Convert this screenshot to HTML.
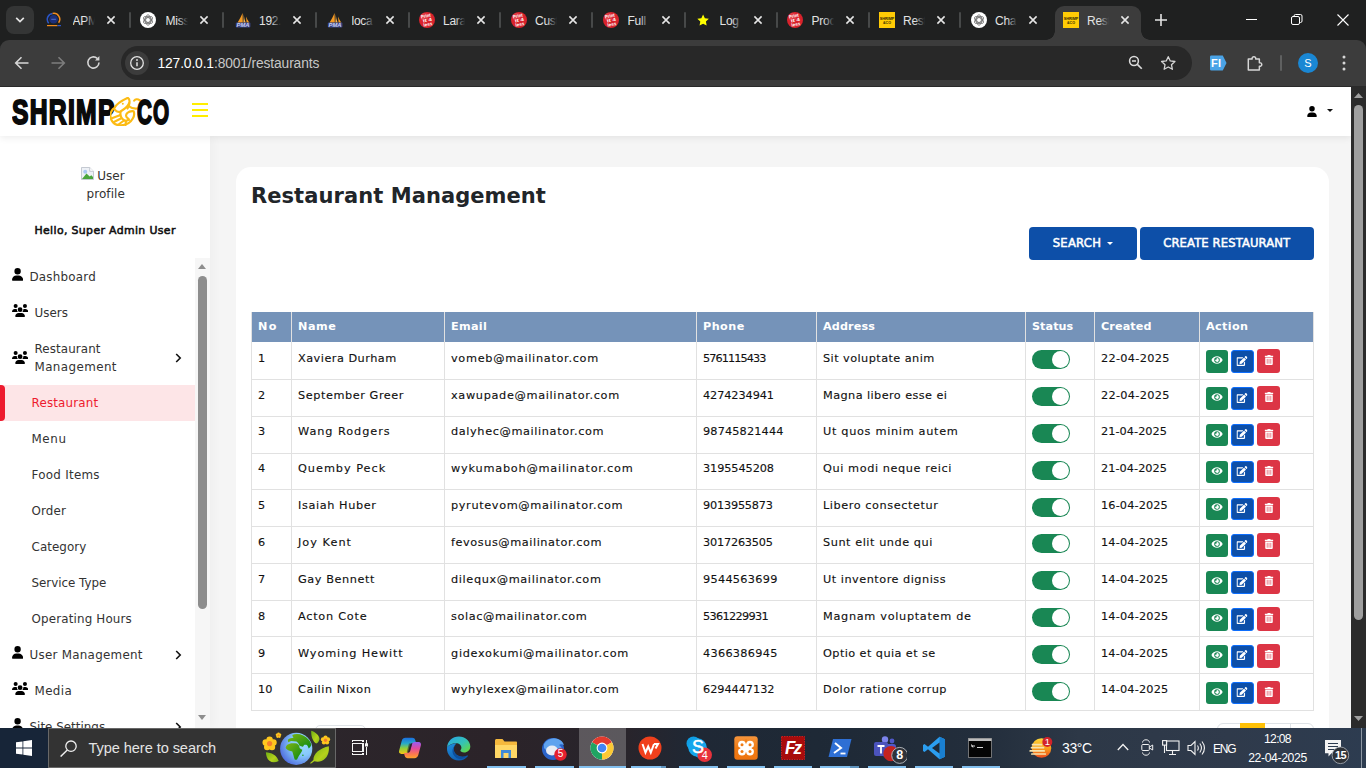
<!DOCTYPE html>
<html lang="en">
<head>
<meta charset="utf-8">
<title>Restaurant Management</title>
<style>
*{box-sizing:border-box;margin:0;padding:0}
html,body{width:1366px;height:768px;overflow:hidden;background:#f5f5f5}
body{position:relative;font-family:"DejaVu Sans","Liberation Sans",sans-serif;color:#212529}
.abs{position:absolute}
svg{display:block}
i{font-style:normal}
/* ---------- Chrome frame ---------- */
#tabstrip{position:absolute;left:0;top:0;width:1366px;height:52px;background:#1f2020;font-family:"Liberation Sans",sans-serif}
#toolbar{position:absolute;left:0;top:40px;width:1366px;height:46px;background:#3c3c3c;border-radius:9px 9px 0 0;font-family:"Liberation Sans",sans-serif}
#tbline{position:absolute;left:0;top:86px;width:1366px;height:1px;background:#2a2a2a}
.tab{position:absolute;top:6px;height:34px;color:#e3e3e3}
.tab .fav{position:absolute;left:8px;top:6px;width:16px;height:16px}
.tab .tt{position:absolute;top:6px;width:22px;height:18px;line-height:18px;overflow:hidden;white-space:nowrap;font-size:12px;letter-spacing:-.25px}
.tab .tt:after{content:"";position:absolute;right:0;top:0;width:10px;height:18px;background:linear-gradient(90deg,rgba(31,32,32,0),#1f2020)}
.tab.act .tt:after{background:linear-gradient(90deg,rgba(60,60,60,0),#3c3c3c)}
.tab .sep{position:absolute;top:6px;width:2px;height:16px;background:#474949;border-radius:1px}
.tab.act{background:#3c3c3c;border-radius:9px 9px 0 0}
.tab.act:before,.tab.act:after{content:"";position:absolute;bottom:0;width:9px;height:9px}
.tab.act:before{left:-9px;background:radial-gradient(circle at 0 0,rgba(60,60,60,0) 8.500px,#3c3c3c 9px)}
.tab.act:after{right:-9px;background:radial-gradient(circle at 100% 0,rgba(60,60,60,0) 8.500px,#3c3c3c 9px)}
#omni{position:absolute;left:121px;top:6px;width:1071px;height:34px;border-radius:17px;background:#282828}
#omni .info{position:absolute;left:4px;top:5px;width:24px;height:24px;border-radius:12px;background:#3c3c3c}
#omni .url{position:absolute;left:36.500px;top:9px;font-size:13.800px;line-height:18px;color:#fff;white-space:nowrap}
#omni .url span{color:#c7c7c7}
/* ---------- page ---------- */
#page{position:absolute;left:0;top:87px;width:1351px;height:641px;background:#f5f5f5;overflow:hidden}
#nav{position:absolute;left:0;top:0;width:1351px;height:49px;background:#fff;box-shadow:0 2px 7px rgba(0,0,0,.075);z-index:3}
#logo .lg{position:absolute;top:3px;font-family:"Liberation Sans",sans-serif;font-weight:700;font-size:34.500px;line-height:44px;color:#0a0a0a;transform-origin:0 50%;transform:scaleX(.715);-webkit-text-stroke:2px #0a0a0a;letter-spacing:1.800px;white-space:nowrap}
#logo .lg.co{transform:scaleX(.6)}
#side{position:absolute;left:0;top:49px;width:210px;height:592px;background:#fff;z-index:2;box-shadow:3px 0 10px rgba(0,0,0,.03)}
.alt{font-size:12px;line-height:18px;color:#333;white-space:nowrap}
.hello{font-size:10.900px;font-weight:400;line-height:18px;color:#111;white-space:nowrap;-webkit-text-stroke:.55px #111}
.ni{font-size:11.900px;line-height:18px;color:#333;white-space:nowrap}
.ni.on{color:#ed1b2e}
#card{position:absolute;left:236px;top:80px;width:1093px;height:600px;background:#fff;border-radius:15px}
#ttl{left:15px;top:13px;letter-spacing:.07px;font-size:21px;font-weight:700;line-height:32px;color:#212529;white-space:nowrap}
.btn{height:33px;border-radius:4px;background:#0d4fa8;color:#fff;font-size:11.600px;font-weight:400;line-height:33px;white-space:nowrap;-webkit-text-stroke:.5px #fff}
.btn .car{position:absolute;left:77.500px;top:15px;width:0;height:0;border-left:3.500px solid transparent;border-right:3.500px solid transparent;border-top:3.500px solid #fff}
#tbl{position:absolute;left:15px;top:145px;width:1063px;height:401px;font-size:11.300px}
.thead{position:absolute;left:0;top:0;width:1063px;height:30px;background:#7593b9}
.th{position:absolute;top:0;height:30px;padding-left:7px;line-height:30px;font-weight:700;color:#fff;font-size:11.200px;white-space:nowrap}
.tr{position:absolute;left:0;width:1063px;height:37px}
.hb{position:absolute;left:0;width:1063px;height:1px;background:#e1e1e1}
.td{position:absolute;top:0;height:36px;padding:7.500px 0 0 7px;line-height:18px;color:#111;white-space:nowrap;-webkit-text-stroke:.12px #111}
.vb{position:absolute;top:0;width:1px;height:399px;background:#e1e1e1}
.tog{position:absolute;left:7px;top:8px;width:38px;height:19px;border-radius:10px;background:#198754}
.tog i{position:absolute;right:1px;top:1px;width:17px;height:17px;border-radius:9px;background:#fff}
.ab{position:absolute;top:8px;width:22.800px;height:22.500px;border-radius:3px}
.ab svg{position:absolute;left:50%;top:50%;transform:translate(-50%,-50%);margin-top:-.8px}
.ab.g svg{margin-top:-1.400px}
.ab.g{left:7px;width:22.300px;background:#198754}
.ab.b{left:32px;background:#0d4fa8;border:1px solid #0d6efd}
.ab.r{left:58px;top:7px;width:23.200px;height:23.500px;background:#dc3545}
#vscroll{position:absolute;left:1351px;top:87px;width:15px;height:641px;background:#2b2b2b}
#vscroll .th2{position:absolute;left:3px;top:17.500px;width:9px;height:515.500px;border-radius:5px;background:#9f9f9f}
/* ---------- taskbar ---------- */
#task{position:absolute;left:0;top:728px;width:1366px;height:40px;background:linear-gradient(90deg,#2d2a2e 0,#2b2329 36%,#28242b 46%,#1f2835 51%,#1e2936 60%,#232e3c 72%,#2d3847 79%,#2f3a4b 90%,#2d3c50 100%);font-family:"Liberation Sans",sans-serif;color:#fff}
.bdg{font-size:10px;line-height:12px;color:#fff;text-align:center;font-family:"Liberation Sans",sans-serif}
.tx{line-height:16px;color:#fff;white-space:nowrap}
</style>
</head>
<body>
<div id="tabstrip">
<div class="abs" style="left:6px;top:6px;width:28px;height:28px;border-radius:8px;background:#343535"><svg class="abs" style="left:8px;top:9px" width="12" height="10" viewBox="0 0 12 10"><path d="M2.2 2.8L6 6.6l3.8-3.8" stroke="#e3e3e3" stroke-width="1.7" fill="none"/></svg></div>
<div class="tab" style="left:40px;width:92px"><span class="fav" style="left:6px"><svg width="16" height="16" viewBox="0 0 16 16"><circle cx="7.600" cy="7.300" r="4.300" fill="#1c2f7a"/><path d="M2.700 11.200A6 6 0 0 1 6.600 1.400" fill="none" stroke="#2a55c8" stroke-width="1.500"/><path d="M6.600 1.400A6 6 0 0 1 12.600 10.800" fill="none" stroke="#f28c1e" stroke-width="1.500"/><path d="M1 13.600h10.500" stroke="#f28c1e" stroke-width="1.200"/><path d="M11.500 13.600h3.500" stroke="#2a55c8" stroke-width="1.200"/><path d="M5.300 7.300h4.600" stroke="#5d7fe0" stroke-width=".8"/></svg></span><span class="tt" style="left:32.5px">APM</span><span class="abs" style="left:65.5px;top:9px"><svg class="x" width="10" height="10" viewBox="0 0 10 10"><path d="M1.400 1.400l7.200 7.200M8.600 1.400L1.400 8.600" stroke="#e6e6e6" stroke-width="1.550" fill="none"/></svg></span><span class="sep" style="left:88.500px"></span></div>
<div class="tab" style="left:133px;width:92px"><span class="fav" style="left:7px"><svg width="16" height="16" viewBox="0 0 16 16"><circle cx="8" cy="8" r="8" fill="#fff"/><g fill="none" stroke="#6b6b6b" stroke-width=".75"><ellipse cx="8" cy="8" rx="2.300" ry="5.200"/><ellipse cx="8" cy="8" rx="2.300" ry="5.200" transform="rotate(60 8 8)"/><ellipse cx="8" cy="8" rx="2.300" ry="5.200" transform="rotate(120 8 8)"/><circle cx="8" cy="8" r="3.600"/></g></svg></span><span class="tt" style="left:32.5px">Miss</span><span class="abs" style="left:65.5px;top:9px"><svg class="x" width="10" height="10" viewBox="0 0 10 10"><path d="M1.400 1.400l7.200 7.200M8.600 1.400L1.400 8.600" stroke="#e6e6e6" stroke-width="1.550" fill="none"/></svg></span><span class="sep" style="left:88.500px"></span></div>
<div class="tab" style="left:226.5px;width:92px"><span class="fav" style="left:8px"><svg width="16" height="16" viewBox="0 0 16 16"><path d="M7.600 1C6.300 4 4.600 7.200 2.400 10.800h5.400z" fill="#f59a23"/><path d="M8.800 2.200c.2 3.200.8 6 2 8.600H8.400z" fill="#f8b553"/><path d="M11 4.400c.9 2.200 2 4.400 3.400 6.400h-2.800z" fill="#f59a23"/></svg><svg class="abs" style="left:0;top:10px" width="16" height="6" viewBox="0 0 16 6"><rect x=".8" y=".6" width="14.600" height="4.800" rx="1" fill="#3a4685"/><text x="8" y="4.500" font-family="Liberation Sans,sans-serif" font-size="4.600" font-weight="700" font-style="italic" fill="#c9d0f5" text-anchor="middle" textLength="13" lengthAdjust="spacingAndGlyphs">PMA</text></svg></span><span class="tt" style="left:32.5px">192.</span><span class="abs" style="left:65.5px;top:9px"><svg class="x" width="10" height="10" viewBox="0 0 10 10"><path d="M1.400 1.400l7.200 7.200M8.600 1.400L1.400 8.600" stroke="#e6e6e6" stroke-width="1.550" fill="none"/></svg></span><span class="sep" style="left:88.500px"></span></div>
<div class="tab" style="left:319px;width:92px"><span class="fav" style="left:8px"><svg width="16" height="16" viewBox="0 0 16 16"><path d="M7.600 1C6.300 4 4.600 7.200 2.400 10.800h5.400z" fill="#f59a23"/><path d="M8.800 2.200c.2 3.200.8 6 2 8.600H8.400z" fill="#f8b553"/><path d="M11 4.400c.9 2.200 2 4.400 3.400 6.400h-2.800z" fill="#f59a23"/></svg><svg class="abs" style="left:0;top:10px" width="16" height="6" viewBox="0 0 16 6"><rect x=".8" y=".6" width="14.600" height="4.800" rx="1" fill="#3a4685"/><text x="8" y="4.500" font-family="Liberation Sans,sans-serif" font-size="4.600" font-weight="700" font-style="italic" fill="#c9d0f5" text-anchor="middle" textLength="13" lengthAdjust="spacingAndGlyphs">PMA</text></svg></span><span class="tt" style="left:32.5px">loca</span><span class="abs" style="left:65.5px;top:9px"><svg class="x" width="10" height="10" viewBox="0 0 10 10"><path d="M1.400 1.400l7.200 7.200M8.600 1.400L1.400 8.600" stroke="#e6e6e6" stroke-width="1.550" fill="none"/></svg></span><span class="sep" style="left:88.500px"></span></div>
<div class="tab" style="left:410.5px;width:92px"><span class="fav" style="left:8px"><svg width="16" height="16" viewBox="0 0 16 16"><circle cx="8" cy="8" r="8" fill="#d8222c"/><circle cx="5.500" cy="5" r="4" fill="#ee5a62" opacity=".45"/><g font-family="Liberation Sans,sans-serif" font-weight="700" fill="#fff" text-anchor="middle" transform="rotate(-12 8 8)"><text x="7.600" y="5.400" font-size="4.600" textLength="10" lengthAdjust="spacingAndGlyphs">Print</text><text x="8.400" y="9.800" font-size="4.800" textLength="9" lengthAdjust="spacingAndGlyphs">it 4</text><text x="8" y="14" font-size="4.600" textLength="9" lengthAdjust="spacingAndGlyphs">less</text></g></svg></span><span class="tt" style="left:32.5px">Lara</span><span class="abs" style="left:65.5px;top:9px"><svg class="x" width="10" height="10" viewBox="0 0 10 10"><path d="M1.400 1.400l7.200 7.200M8.600 1.400L1.400 8.600" stroke="#e6e6e6" stroke-width="1.550" fill="none"/></svg></span><span class="sep" style="left:88.500px"></span></div>
<div class="tab" style="left:502.5px;width:92px"><span class="fav" style="left:8px"><svg width="16" height="16" viewBox="0 0 16 16"><circle cx="8" cy="8" r="8" fill="#d8222c"/><circle cx="5.500" cy="5" r="4" fill="#ee5a62" opacity=".45"/><g font-family="Liberation Sans,sans-serif" font-weight="700" fill="#fff" text-anchor="middle" transform="rotate(-12 8 8)"><text x="7.600" y="5.400" font-size="4.600" textLength="10" lengthAdjust="spacingAndGlyphs">Print</text><text x="8.400" y="9.800" font-size="4.800" textLength="9" lengthAdjust="spacingAndGlyphs">it 4</text><text x="8" y="14" font-size="4.600" textLength="9" lengthAdjust="spacingAndGlyphs">less</text></g></svg></span><span class="tt" style="left:32.5px">Cust</span><span class="abs" style="left:65.5px;top:9px"><svg class="x" width="10" height="10" viewBox="0 0 10 10"><path d="M1.400 1.400l7.200 7.200M8.600 1.400L1.400 8.600" stroke="#e6e6e6" stroke-width="1.550" fill="none"/></svg></span><span class="sep" style="left:88.500px"></span></div>
<div class="tab" style="left:595px;width:92px"><span class="fav" style="left:8px"><svg width="16" height="16" viewBox="0 0 16 16"><circle cx="8" cy="8" r="8" fill="#d8222c"/><circle cx="5.500" cy="5" r="4" fill="#ee5a62" opacity=".45"/><g font-family="Liberation Sans,sans-serif" font-weight="700" fill="#fff" text-anchor="middle" transform="rotate(-12 8 8)"><text x="7.600" y="5.400" font-size="4.600" textLength="10" lengthAdjust="spacingAndGlyphs">Print</text><text x="8.400" y="9.800" font-size="4.800" textLength="9" lengthAdjust="spacingAndGlyphs">it 4</text><text x="8" y="14" font-size="4.600" textLength="9" lengthAdjust="spacingAndGlyphs">less</text></g></svg></span><span class="tt" style="left:32.5px">Full</span><span class="abs" style="left:65.5px;top:9px"><svg class="x" width="10" height="10" viewBox="0 0 10 10"><path d="M1.400 1.400l7.200 7.200M8.600 1.400L1.400 8.600" stroke="#e6e6e6" stroke-width="1.550" fill="none"/></svg></span><span class="sep" style="left:88.500px"></span></div>
<div class="tab" style="left:687px;width:92px"><span class="fav" style="left:8px"><svg width="16" height="16" viewBox="0 0 16 16"><path d="M8.100 2.600l1.750 3.700 4 .5-2.950 2.800.75 4L8.100 11.650 4.550 13.600l.75-4L2.350 6.800l4-.5z" fill="#ffff00"/></svg></span><span class="tt" style="left:32.5px">Log</span><span class="abs" style="left:65.5px;top:9px"><svg class="x" width="10" height="10" viewBox="0 0 10 10"><path d="M1.400 1.400l7.200 7.200M8.600 1.400L1.400 8.600" stroke="#e6e6e6" stroke-width="1.550" fill="none"/></svg></span><span class="sep" style="left:88.500px"></span></div>
<div class="tab" style="left:779px;width:92px"><span class="fav" style="left:8px"><svg width="16" height="16" viewBox="0 0 16 16"><circle cx="8" cy="8" r="8" fill="#d8222c"/><circle cx="5.500" cy="5" r="4" fill="#ee5a62" opacity=".45"/><g font-family="Liberation Sans,sans-serif" font-weight="700" fill="#fff" text-anchor="middle" transform="rotate(-12 8 8)"><text x="7.600" y="5.400" font-size="4.600" textLength="10" lengthAdjust="spacingAndGlyphs">Print</text><text x="8.400" y="9.800" font-size="4.800" textLength="9" lengthAdjust="spacingAndGlyphs">it 4</text><text x="8" y="14" font-size="4.600" textLength="9" lengthAdjust="spacingAndGlyphs">less</text></g></svg></span><span class="tt" style="left:32.5px">Proc</span><span class="abs" style="left:65.5px;top:9px"><svg class="x" width="10" height="10" viewBox="0 0 10 10"><path d="M1.400 1.400l7.200 7.200M8.600 1.400L1.400 8.600" stroke="#e6e6e6" stroke-width="1.550" fill="none"/></svg></span><span class="sep" style="left:88.500px"></span></div>
<div class="tab" style="left:870.5px;width:92px"><span class="fav" style="left:8px"><svg width="16" height="16" viewBox="0 0 16 16"><rect width="16" height="16" fill="#ffcb05"/><g font-family="Liberation Sans,sans-serif" font-weight="700" fill="#2b2203" text-anchor="middle"><text x="8" y="7.600" font-size="4.400" textLength="14.500" lengthAdjust="spacingAndGlyphs">SHRIMP</text><text x="8" y="12" font-size="4.400" textLength="8" lengthAdjust="spacingAndGlyphs">&amp;CO</text></g></svg></span><span class="tt" style="left:32.5px">Rest</span><span class="abs" style="left:65.5px;top:9px"><svg class="x" width="10" height="10" viewBox="0 0 10 10"><path d="M1.400 1.400l7.200 7.200M8.600 1.400L1.400 8.600" stroke="#e6e6e6" stroke-width="1.550" fill="none"/></svg></span><span class="sep" style="left:88.500px"></span></div>
<div class="tab" style="left:962.5px;width:92px"><span class="fav" style="left:8px"><svg width="16" height="16" viewBox="0 0 16 16"><circle cx="8" cy="8" r="8" fill="#fff"/><g fill="none" stroke="#6b6b6b" stroke-width=".75"><ellipse cx="8" cy="8" rx="2.300" ry="5.200"/><ellipse cx="8" cy="8" rx="2.300" ry="5.200" transform="rotate(60 8 8)"/><ellipse cx="8" cy="8" rx="2.300" ry="5.200" transform="rotate(120 8 8)"/><circle cx="8" cy="8" r="3.600"/></g></svg></span><span class="tt" style="left:32.5px">Cha</span><span class="abs" style="left:65.5px;top:9px"><svg class="x" width="10" height="10" viewBox="0 0 10 10"><path d="M1.400 1.400l7.200 7.200M8.600 1.400L1.400 8.600" stroke="#e6e6e6" stroke-width="1.550" fill="none"/></svg></span></div>
<div class="tab act" style="left:1055px;width:86px"><span class="fav" style="left:8px"><svg width="16" height="16" viewBox="0 0 16 16"><rect width="16" height="16" fill="#ffcb05"/><g font-family="Liberation Sans,sans-serif" font-weight="700" fill="#2b2203" text-anchor="middle"><text x="8" y="7.600" font-size="4.400" textLength="14.500" lengthAdjust="spacingAndGlyphs">SHRIMP</text><text x="8" y="12" font-size="4.400" textLength="8" lengthAdjust="spacingAndGlyphs">&amp;CO</text></g></svg></span><span class="tt" style="left:32px">Rest</span><span class="abs" style="left:65px;top:9px"><svg class="x" width="10" height="10" viewBox="0 0 10 10"><path d="M1.400 1.400l7.200 7.200M8.600 1.400L1.400 8.600" stroke="#e6e6e6" stroke-width="1.550" fill="none"/></svg></span></div>
<svg class="abs" style="left:1154px;top:13px" width="14" height="14" viewBox="0 0 14 14"><path d="M7 1v12M1 7h12" stroke="#e3e3e3" stroke-width="1.6"/></svg>
<svg class="abs" style="left:1246px;top:14px" width="11" height="11" viewBox="0 0 11 11"><path d="M0 5.5h11" stroke="#fff" stroke-width="1"/></svg>
<svg class="abs" style="left:1291px;top:14px" width="12" height="12" viewBox="0 0 12 12"><rect x=".5" y="2.5" width="8" height="8" rx="1.5" fill="none" stroke="#fff"/><path d="M3 2.5V2A1.5 1.5 0 0 1 4.5.5H9.5A1.5 1.5 0 0 1 11 2V7A1.5 1.5 0 0 1 9.5 8.5H9" fill="none" stroke="#fff"/></svg>
<svg class="abs" style="left:1337px;top:14px" width="12" height="12" viewBox="0 0 12 12"><path d="M.5.5l11 11M11.5.5l-11 11" stroke="#fff" stroke-width="1.1"/></svg>
</div>
<div id="toolbar">
<svg class="abs" style="left:14px;top:15px" width="16" height="16" viewBox="0 0 16 16"><path d="M14.5 8H2M7.5 2.2L1.7 8l5.8 5.8" fill="none" stroke="#d6d6d6" stroke-width="1.6"/></svg>
<svg class="abs" style="left:50px;top:15px" width="16" height="16" viewBox="0 0 16 16"><path d="M1.5 8H14M8.5 2.2L14.3 8l-5.8 5.8" fill="none" stroke="#7d7d7d" stroke-width="1.6"/></svg>
<svg class="abs" style="left:85px;top:14px" width="17" height="17" viewBox="0 0 17 17"><path d="M14 8.6A5.6 5.6 0 1 1 12.2 4.4" fill="none" stroke="#d6d6d6" stroke-width="1.6"/><path d="M14.4 2v4.4H10z" fill="#d6d6d6"/></svg>
<div id="omni"><div class="info"><svg class="abs" style="left:4px;top:4px" width="16" height="16" viewBox="0 0 16 16"><circle cx="8" cy="8" r="6.3" fill="none" stroke="#e3e3e3" stroke-width="1.3"/><path d="M8 7.2v4" stroke="#e3e3e3" stroke-width="1.5"/><circle cx="8" cy="5" r=".95" fill="#e3e3e3"/></svg></div><div class="url" style="letter-spacing:-0.125px">127.0.0.1<span>:8001/restaurants</span></div>
<svg class="abs" style="left:1006.500px;top:9.200px" width="15" height="15" viewBox="0 0 17 17"><circle cx="6.800" cy="6.800" r="5" fill="none" stroke="#dcdcdc" stroke-width="1.750"/><path d="M10.600 10.600l5 5" stroke="#dcdcdc" stroke-width="1.900"/><path d="M4.500 6.800h4.600" stroke="#dcdcdc" stroke-width="1.700"/></svg>
<svg class="abs" style="left:1039px;top:8.700px" width="16.500" height="16.500" viewBox="0 0 18 18"><path d="M9 1.8l2.2 4.7 5.1.6-3.8 3.5 1 5L9 13.1l-4.5 2.5 1-5L1.700 7.100l5.100-.6z" fill="none" stroke="#d6d6d6" stroke-width="1.4" stroke-linejoin="round"/></svg>
</div>
<svg class="abs" style="left:1210px;top:15px" width="17" height="16" viewBox="0 0 18 16"><path d="M1.500 0h12l4 8-4 8h-12A1.500 1.500 0 0 1 0 14.500v-13A1.500 1.500 0 0 1 1.500 0z" fill="#4aa3e6"/></svg><div class="abs" style="left:1211px;top:16px;font-size:11px;font-weight:700;color:#fff;line-height:14px;letter-spacing:.2px">FI</div>
<svg class="abs" style="left:1246px;top:13.500px" width="17.500" height="17.500" viewBox="0 0 19 19"><path d="M2.500 5.500h4.200a2 2 0 1 1 3.800 0h4v4a2 2 0 1 1 0 3.800v4h-12z" fill="none" stroke="#d6d6d6" stroke-width="1.6" stroke-linejoin="round"/></svg>
<div class="abs" style="left:1280px;top:15px;width:2px;height:16px;background:#5f6060;border-radius:1px"></div>
<div class="abs" style="left:1298px;top:13px;width:20px;height:20px;border-radius:10px;background:#1a87d4;color:#fff;font-size:11px;line-height:20px;text-align:center">S</div>
<svg class="abs" style="left:1342px;top:15px" width="4" height="16" viewBox="0 0 4 16"><circle cx="2" cy="2" r="1.500" fill="#d6d6d6"/><circle cx="2" cy="8" r="1.500" fill="#d6d6d6"/><circle cx="2" cy="14" r="1.500" fill="#d6d6d6"/></svg>
</div>
<div id="tbline"></div>
<div id="page">
<div id="nav">
<div id="logo"><span class="lg" style="left:12px">SHRIMP</span>
<svg class="abs" style="left:109.700px;top:10px" width="32" height="29" viewBox="0 0 32 29"><g fill="none" stroke="#fcbb14" stroke-width="2.150" stroke-linecap="round" stroke-linejoin="round"><path d="M17.800 .8C12 3.500 6 7 4 11.500c1.500 3 4.500 4 6.500 3 3.500-2 7.500-5.500 8.800-8.500.5-2 .2-4-1.500-5.200z"/><path d="M3 12C.5 15-.2 19 1.200 22.500 3 26.500 7 28.500 11 28.300c5-.3 9.500-2.800 11.800-6.800 1.500-2.500 1.700-5 .9-7.200-2.200-.3-4.700.2-6.400 1.700-1.800 1.800-1.500 4 .2 5 1 .5 1.500 1 1.300 2"/><path d="M10.500 14.800c-.5 3.200 1 6.700 3.500 8.400 1.500.8 3.500.3 4.500-.7"/><path d="M1.200 21.500l8.600-3.300M4 25l7.300-3.700M8.500 27.500l5.500-4M15.500 28l.5-4"/><path d="M19.300 9.500c1.700 1.500 5.200 2.300 8.200 2 2.500-.5 4-2.500 3.800-5-.3-3-2.800-4.500-4.800-4.200-1 .2-1.800.7-2.300 1.300"/><path d="M19.300 6c.2 2 0 3.500-1.800 5.500"/></g><circle cx="12.800" cy="6.700" r="1" fill="#fcbf17"/></svg>
<span class="lg co" style="left:136.500px">CO</span></div>
<div class="abs" style="left:192px;top:15.500px;width:16px;height:2px;background:#ffee00"></div><div class="abs" style="left:192px;top:21.800px;width:16px;height:2px;background:#ffee00"></div><div class="abs" style="left:192px;top:27.800px;width:16px;height:2px;background:#ffee00"></div>
<div class="abs" style="left:1307px;top:19px"><svg width="10" height="11" viewBox="0 0 448 512"><path fill="#000" d="M224 256A128 128 0 1 0 224 0a128 128 0 1 0 0 256zm-45.700 48C79.800 304 0 383.800 0 482.300C0 498.700 13.300 512 29.700 512H418.300c16.400 0 29.700-13.300 29.700-29.700C448 383.800 368.200 304 269.700 304H178.300z"/></svg></div>
<div class="abs" style="left:1327px;top:22.300px;width:0;height:0;border-left:3.300px solid transparent;border-right:3.300px solid transparent;border-top:3.600px solid #111"></div>
</div>
<div id="side">
<div class="abs" style="left:81px;top:31px"><svg width="13" height="13" viewBox="0 0 13 13"><path d="M.5.5h8.200l3.800 3.800v8.200H.5z" fill="#eef1f6" stroke="#b9bec8" stroke-width=".8"/><path d="M8.700.5v3.800h3.800" fill="#fff" stroke="#b9bec8" stroke-width=".8"/><circle cx="4.200" cy="4.800" r="2" fill="#a9c7f2"/><path d="M1 12l4.500-5.500 3.200 3 1.600-1.300L12 10v2z" fill="#4aa63c"/></svg></div>
<div class="abs alt" style="left:97.300px;top:31px"><span style="letter-spacing:-0.024px">User</span></div>
<div class="abs alt" style="left:86.500px;top:49px"><span style="letter-spacing:0.079px">profile</span></div>
<div class="abs hello" style="left:34.500px;top:85.500px"><span style="letter-spacing:0.363px">Hello, Super Admin User</span></div>
<div class="abs" style="left:11.800px;top:132px"><svg width="11.2" height="12.8" viewBox="0 0 448 512"><path fill="#000" d="M224 256A128 128 0 1 0 224 0a128 128 0 1 0 0 256zm-45.700 48C79.800 304 0 383.800 0 482.300C0 498.700 13.300 512 29.700 512H418.300c16.400 0 29.700-13.300 29.700-29.700C448 383.800 368.200 304 269.700 304H178.300z"/></svg></div><div class="abs ni" style="left:29.5px;top:132px"><span style="letter-spacing:0.214px">Dashboard</span></div>
<div class="abs" style="left:11.800px;top:168px"><svg width="16.2" height="13" viewBox="0 0 640 512"><path fill="#000" d="M144 0a80 80 0 1 1 0 160A80 80 0 1 1 144 0zM512 0a80 80 0 1 1 0 160A80 80 0 1 1 512 0zM0 298.700C0 239.800 47.800 192 106.700 192h42.700c15.900 0 31 3.500 44.600 9.700c-1.300 7.200-1.900 14.700-1.900 22.300c0 38.200 16.800 72.500 43.300 96c-.2 0-.4 0-.7 0H21.300C9.600 320 0 310.400 0 298.700zM405.300 320c-.2 0-.4 0-.7 0c26.600-23.500 43.300-57.800 43.300-96c0-7.600-.7-15-1.900-22.300c13.600-6.300 28.700-9.700 44.600-9.700h42.700C592.200 192 640 239.800 640 298.700c0 11.800-9.600 21.300-21.300 21.300H405.300zM224 224a96 96 0 1 1 192 0 96 96 0 1 1 -192 0zM128 485.300C128 411.700 187.700 352 261.300 352H378.700C452.300 352 512 411.700 512 485.300c0 14.700-11.900 26.700-26.700 26.700H154.700c-14.700 0-26.700-11.900-26.700-26.700z"/></svg></div><div class="abs ni" style="left:34.5px;top:168px"><span style="letter-spacing:0.037px">Users</span></div>
<div class="abs" style="left:11.800px;top:214.5px"><svg width="16.2" height="13" viewBox="0 0 640 512"><path fill="#000" d="M144 0a80 80 0 1 1 0 160A80 80 0 1 1 144 0zM512 0a80 80 0 1 1 0 160A80 80 0 1 1 512 0zM0 298.700C0 239.800 47.800 192 106.700 192h42.700c15.900 0 31 3.500 44.600 9.700c-1.300 7.200-1.900 14.700-1.900 22.300c0 38.200 16.800 72.500 43.300 96c-.2 0-.4 0-.7 0H21.300C9.600 320 0 310.400 0 298.700zM405.300 320c-.2 0-.4 0-.7 0c26.600-23.500 43.300-57.800 43.300-96c0-7.600-.7-15-1.900-22.300c13.600-6.300 28.700-9.700 44.600-9.700h42.700C592.200 192 640 239.800 640 298.700c0 11.800-9.600 21.300-21.300 21.300H405.300zM224 224a96 96 0 1 1 192 0 96 96 0 1 1 -192 0zM128 485.300C128 411.700 187.700 352 261.300 352H378.700C452.300 352 512 411.700 512 485.300c0 14.700-11.900 26.700-26.700 26.700H154.700c-14.700 0-26.700-11.900-26.700-26.700z"/></svg></div><div class="abs ni" style="left:34.5px;top:204px"><span style="letter-spacing:0.102px">Restaurant</span></div><div class="abs ni" style="left:34.5px;top:222px"><span style="letter-spacing:0.409px">Management</span></div><div class="abs" style="left:174.500px;top:217px"><svg width="7" height="10" viewBox="0 0 7 10"><path d="M1.200 1l4 4-4 4" fill="none" stroke="#111" stroke-width="1.600"/></svg></div>
<div class="abs" style="left:0;top:249px;width:195px;height:36px;background:#fde5e7"></div><div class="abs" style="left:0;top:249px;width:5px;height:36px;background:#ed1b2e;border-radius:0 4px 4px 0"></div><div class="abs ni sub on" style="left:31.5px;top:258px"><span style="letter-spacing:0.169px">Restaurant</span></div>
<div class="abs ni sub" style="left:31.5px;top:294px"><span style="letter-spacing:0.599px">Menu</span></div>
<div class="abs ni sub" style="left:31.5px;top:330px"><span style="letter-spacing:0.274px">Food Items</span></div>
<div class="abs ni sub" style="left:31.5px;top:366px"><span style="letter-spacing:0.163px">Order</span></div>
<div class="abs ni sub" style="left:31.5px;top:402px"><span style="letter-spacing:0.073px">Category</span></div>
<div class="abs ni sub" style="left:31.5px;top:438px"><span style="letter-spacing:-0.02px">Service Type</span></div>
<div class="abs ni sub" style="left:31.5px;top:474px"><span style="letter-spacing:0.159px">Operating Hours</span></div>
<div class="abs" style="left:11.800px;top:510px"><svg width="11.2" height="12.8" viewBox="0 0 448 512"><path fill="#000" d="M224 256A128 128 0 1 0 224 0a128 128 0 1 0 0 256zm-45.700 48C79.800 304 0 383.800 0 482.300C0 498.700 13.300 512 29.700 512H418.300c16.400 0 29.700-13.300 29.700-29.700C448 383.800 368.200 304 269.700 304H178.300z"/></svg></div><div class="abs ni" style="left:29.5px;top:510px"><span style="letter-spacing:0.269px">User Management</span></div><div class="abs" style="left:174.500px;top:514px"><svg width="7" height="10" viewBox="0 0 7 10"><path d="M1.200 1l4 4-4 4" fill="none" stroke="#111" stroke-width="1.600"/></svg></div>
<div class="abs" style="left:11.800px;top:546px"><svg width="16.2" height="13" viewBox="0 0 640 512"><path fill="#000" d="M144 0a80 80 0 1 1 0 160A80 80 0 1 1 144 0zM512 0a80 80 0 1 1 0 160A80 80 0 1 1 512 0zM0 298.700C0 239.800 47.800 192 106.700 192h42.700c15.900 0 31 3.500 44.600 9.700c-1.300 7.200-1.900 14.700-1.900 22.300c0 38.200 16.800 72.500 43.300 96c-.2 0-.4 0-.7 0H21.300C9.600 320 0 310.400 0 298.700zM405.300 320c-.2 0-.4 0-.7 0c26.600-23.500 43.300-57.800 43.300-96c0-7.600-.7-15-1.900-22.300c13.600-6.300 28.700-9.700 44.600-9.700h42.700C592.200 192 640 239.800 640 298.700c0 11.800-9.600 21.300-21.300 21.300H405.300zM224 224a96 96 0 1 1 192 0 96 96 0 1 1 -192 0zM128 485.300C128 411.700 187.700 352 261.300 352H378.700C452.300 352 512 411.700 512 485.300c0 14.700-11.900 26.700-26.700 26.700H154.700c-14.700 0-26.700-11.900-26.700-26.700z"/></svg></div><div class="abs ni" style="left:34.5px;top:546px"><span style="letter-spacing:0.383px">Media</span></div>
<div class="abs" style="left:11.800px;top:582px"><svg width="11.2" height="12.8" viewBox="0 0 448 512"><path fill="#000" d="M224 256A128 128 0 1 0 224 0a128 128 0 1 0 0 256zm-45.700 48C79.800 304 0 383.800 0 482.300C0 498.700 13.300 512 29.700 512H418.300c16.400 0 29.700-13.300 29.700-29.700C448 383.800 368.200 304 269.700 304H178.300z"/></svg></div><div class="abs ni" style="left:29.5px;top:582px"><span style="letter-spacing:0.019px">Site Settings</span></div><div class="abs" style="left:174.500px;top:586px"><svg width="7" height="10" viewBox="0 0 7 10"><path d="M1.200 1l4 4-4 4" fill="none" stroke="#111" stroke-width="1.600"/></svg></div>
<div class="abs" style="left:195px;top:122px;width:15px;height:470px;background:#f6f6f6"></div>
<div class="abs" style="left:198px;top:140px;width:9px;height:333px;border-radius:5px;background:#8d8d8d"></div>
<div class="abs" style="left:198px;top:128px;width:0;height:0;border-left:4.500px solid transparent;border-right:4.500px solid transparent;border-bottom:5px solid #8d8d8d"></div>
<div class="abs" style="left:198px;top:579px;width:0;height:0;border-left:4.500px solid transparent;border-right:4.500px solid transparent;border-top:5px solid #8d8d8d"></div>
</div>
<div id="card">
<h1 class="abs" id="ttl">Restaurant Management</h1>
<div class="abs btn" style="left:793px;top:60px;width:108px"><span class="abs" style="left:23.700px;top:0"><span style="letter-spacing:0.262px">SEARCH</span></span><span class="car"></span></div>
<div class="abs btn" style="left:904px;top:60px;width:174px"><span class="abs" style="left:23.200px;top:0"><span style="letter-spacing:0.11px">CREATE RESTAURANT</span></span></div>
<div id="tbl">
<div class="thead">
<div class="th" style="left:0px;width:40px"><span style="letter-spacing:1.439px">No</span></div>
<div class="th" style="left:40px;width:153px"><span style="letter-spacing:0.57px">Name</span></div>
<div class="th" style="left:193px;width:252px"><span style="letter-spacing:0.337px">Email</span></div>
<div class="th" style="left:445px;width:120px"><span style="letter-spacing:0.465px">Phone</span></div>
<div class="th" style="left:565px;width:209px"><span style="letter-spacing:0.142px">Address</span></div>
<div class="th" style="left:774px;width:69px"><span style="letter-spacing:0.067px">Status</span></div>
<div class="th" style="left:843px;width:105px"><span style="letter-spacing:0.107px">Created</span></div>
<div class="th" style="left:948px;width:114px"><span style="letter-spacing:0.388px">Action</span></div>
</div>
<div class="tr" style="top:30.2px">
<div class="td" style="left:0px;width:40px">1</div>
<div class="td" style="left:40px;width:153px"><span style="letter-spacing:0.477px">Xaviera Durham</span></div>
<div class="td" style="left:193px;width:252px"><span style="letter-spacing:0.688px">vomeb@mailinator.com</span></div>
<div class="td" style="left:445px;width:120px"><span style="letter-spacing:-0.931px">5761115433</span></div>
<div class="td" style="left:565px;width:209px"><span style="letter-spacing:0.432px">Sit voluptate anim</span></div>
<div class="td" style="left:774px;width:69px"><span class="tog"><i></i></span></div>
<div class="td" style="left:843px;width:105px"><span style="letter-spacing:0.305px">22-04-2025</span></div>
<div class="td" style="left:948px;width:114px"><span class="ab g"><svg width="11.500" height="10" viewBox="0 0 576 512"><path fill="#fff" d="M572.520 241.400C518.290 135.590 410.930 64 288 64S57.680 135.640 3.480 241.410a32.350 32.350 0 0 0 0 29.190C57.710 376.410 165.070 448 288 448s230.320-71.640 284.520-177.410a32.350 32.350 0 0 0 0-29.190zM288 400a144 144 0 1 1 144-144 143.930 143.930 0 0 1-144 144zm0-240a95.310 95.310 0 0 0-25.310 3.790 47.850 47.850 0 0 1-66.900 66.900A95.780 95.780 0 1 0 288 160z"/></svg></span><span class="ab b"><svg width="11" height="10" viewBox="0 0 576 512"><path fill="#fff" d="M402.600 83.200l90.200 90.200c3.800 3.800 3.800 10 0 13.800L274.400 405.600l-92.800 10.300c-12.400 1.400-22.900-9.100-21.500-21.500l10.300-92.800L388.800 83.200c3.800-3.800 10-3.800 13.800 0zm162-22.900l-48.800-48.800c-15.200-15.200-39.900-15.200-55.200 0l-35.400 35.400c-3.800 3.800-3.800 10 0 13.800l90.200 90.200c3.800 3.800 10 3.800 13.800 0l35.400-35.400c15.200-15.300 15.200-40 0-55.200zM384 346.200V448H64V128h229.800c3.200 0 6.200-1.300 8.500-3.500l40-40c7.600-7.600 2.200-20.500-8.500-20.500H48C21.500 64 0 85.500 0 112v352c0 26.500 21.500 48 48 48h352c26.500 0 48-21.500 48-48V306.200c0-10.700-12.900-16-20.500-8.500l-40 40c-2.200 2.300-3.500 5.300-3.500 8.500z"/></svg></span><span class="ab r"><svg width="9" height="10" viewBox="0 0 448 512"><path fill="#fff" d="M32 464a48 48 0 0 0 48 48h288a48 48 0 0 0 48-48V128H32zm272-256a16 16 0 0 1 32 0v224a16 16 0 0 1-32 0zm-96 0a16 16 0 0 1 32 0v224a16 16 0 0 1-32 0zm-96 0a16 16 0 0 1 32 0v224a16 16 0 0 1-32 0zM432 32H312l-9.400-18.700A24 24 0 0 0 281.100 0H166.800a23.720 23.720 0 0 0-21.400 13.300L136 32H16A16 16 0 0 0 0 48v32a16 16 0 0 0 16 16h416a16 16 0 0 0 16-16V48a16 16 0 0 0-16-16z"/></svg></span></div>
</div>
<div class="tr" style="top:67.05px">
<div class="td" style="left:0px;width:40px">2</div>
<div class="td" style="left:40px;width:153px"><span style="letter-spacing:0.554px">September Greer</span></div>
<div class="td" style="left:193px;width:252px"><span style="letter-spacing:0.662px">xawupade@mailinator.com</span></div>
<div class="td" style="left:445px;width:120px"><span style="letter-spacing:-0.098px">4274234941</span></div>
<div class="td" style="left:565px;width:209px"><span style="letter-spacing:0.412px">Magna libero esse ei</span></div>
<div class="td" style="left:774px;width:69px"><span class="tog"><i></i></span></div>
<div class="td" style="left:843px;width:105px"><span style="letter-spacing:0.305px">22-04-2025</span></div>
<div class="td" style="left:948px;width:114px"><span class="ab g"><svg width="11.500" height="10" viewBox="0 0 576 512"><path fill="#fff" d="M572.520 241.400C518.290 135.590 410.930 64 288 64S57.680 135.640 3.480 241.410a32.350 32.350 0 0 0 0 29.190C57.710 376.410 165.070 448 288 448s230.320-71.640 284.520-177.410a32.350 32.350 0 0 0 0-29.190zM288 400a144 144 0 1 1 144-144 143.930 143.930 0 0 1-144 144zm0-240a95.310 95.310 0 0 0-25.310 3.790 47.850 47.850 0 0 1-66.900 66.900A95.780 95.780 0 1 0 288 160z"/></svg></span><span class="ab b"><svg width="11" height="10" viewBox="0 0 576 512"><path fill="#fff" d="M402.600 83.200l90.200 90.200c3.800 3.800 3.800 10 0 13.800L274.400 405.600l-92.800 10.300c-12.400 1.400-22.900-9.100-21.500-21.500l10.300-92.800L388.800 83.200c3.800-3.800 10-3.800 13.800 0zm162-22.900l-48.800-48.800c-15.200-15.200-39.900-15.200-55.200 0l-35.400 35.400c-3.800 3.800-3.800 10 0 13.800l90.200 90.200c3.800 3.800 10 3.800 13.800 0l35.400-35.400c15.200-15.300 15.200-40 0-55.200zM384 346.200V448H64V128h229.800c3.200 0 6.200-1.300 8.500-3.500l40-40c7.600-7.600 2.200-20.500-8.500-20.500H48C21.500 64 0 85.500 0 112v352c0 26.500 21.500 48 48 48h352c26.500 0 48-21.500 48-48V306.200c0-10.700-12.900-16-20.500-8.500l-40 40c-2.200 2.300-3.500 5.300-3.500 8.500z"/></svg></span><span class="ab r"><svg width="9" height="10" viewBox="0 0 448 512"><path fill="#fff" d="M32 464a48 48 0 0 0 48 48h288a48 48 0 0 0 48-48V128H32zm272-256a16 16 0 0 1 32 0v224a16 16 0 0 1-32 0zm-96 0a16 16 0 0 1 32 0v224a16 16 0 0 1-32 0zm-96 0a16 16 0 0 1 32 0v224a16 16 0 0 1-32 0zM432 32H312l-9.400-18.700A24 24 0 0 0 281.100 0H166.800a23.720 23.720 0 0 0-21.400 13.300L136 32H16A16 16 0 0 0 0 48v32a16 16 0 0 0 16 16h416a16 16 0 0 0 16-16V48a16 16 0 0 0-16-16z"/></svg></span></div>
</div>
<div class="tr" style="top:103.9px">
<div class="td" style="left:0px;width:40px">3</div>
<div class="td" style="left:40px;width:153px"><span style="letter-spacing:0.93px">Wang Rodgers</span></div>
<div class="td" style="left:193px;width:252px"><span style="letter-spacing:0.612px">dalyhec@mailinator.com</span></div>
<div class="td" style="left:445px;width:120px"><span style="letter-spacing:0.133px">98745821444</span></div>
<div class="td" style="left:565px;width:209px"><span style="letter-spacing:0.682px">Ut quos minim autem</span></div>
<div class="td" style="left:774px;width:69px"><span class="tog"><i></i></span></div>
<div class="td" style="left:843px;width:105px"><span style="letter-spacing:0.038px">21-04-2025</span></div>
<div class="td" style="left:948px;width:114px"><span class="ab g"><svg width="11.500" height="10" viewBox="0 0 576 512"><path fill="#fff" d="M572.520 241.400C518.290 135.590 410.930 64 288 64S57.680 135.640 3.480 241.410a32.350 32.350 0 0 0 0 29.190C57.710 376.410 165.070 448 288 448s230.320-71.640 284.520-177.410a32.350 32.350 0 0 0 0-29.190zM288 400a144 144 0 1 1 144-144 143.930 143.930 0 0 1-144 144zm0-240a95.310 95.310 0 0 0-25.310 3.790 47.850 47.850 0 0 1-66.900 66.900A95.780 95.780 0 1 0 288 160z"/></svg></span><span class="ab b"><svg width="11" height="10" viewBox="0 0 576 512"><path fill="#fff" d="M402.600 83.200l90.200 90.200c3.800 3.800 3.800 10 0 13.800L274.400 405.600l-92.800 10.300c-12.400 1.400-22.900-9.100-21.500-21.500l10.300-92.800L388.800 83.200c3.800-3.800 10-3.800 13.800 0zm162-22.900l-48.800-48.800c-15.200-15.200-39.900-15.200-55.200 0l-35.400 35.400c-3.800 3.800-3.800 10 0 13.800l90.200 90.200c3.800 3.800 10 3.800 13.800 0l35.400-35.400c15.200-15.300 15.200-40 0-55.200zM384 346.200V448H64V128h229.800c3.200 0 6.200-1.300 8.500-3.500l40-40c7.600-7.600 2.200-20.500-8.500-20.500H48C21.500 64 0 85.500 0 112v352c0 26.500 21.500 48 48 48h352c26.500 0 48-21.500 48-48V306.200c0-10.700-12.900-16-20.500-8.500l-40 40c-2.200 2.300-3.500 5.300-3.500 8.500z"/></svg></span><span class="ab r"><svg width="9" height="10" viewBox="0 0 448 512"><path fill="#fff" d="M32 464a48 48 0 0 0 48 48h288a48 48 0 0 0 48-48V128H32zm272-256a16 16 0 0 1 32 0v224a16 16 0 0 1-32 0zm-96 0a16 16 0 0 1 32 0v224a16 16 0 0 1-32 0zm-96 0a16 16 0 0 1 32 0v224a16 16 0 0 1-32 0zM432 32H312l-9.400-18.700A24 24 0 0 0 281.100 0H166.800a23.720 23.720 0 0 0-21.400 13.300L136 32H16A16 16 0 0 0 0 48v32a16 16 0 0 0 16 16h416a16 16 0 0 0 16-16V48a16 16 0 0 0-16-16z"/></svg></span></div>
</div>
<div class="tr" style="top:140.75px">
<div class="td" style="left:0px;width:40px">4</div>
<div class="td" style="left:40px;width:153px"><span style="letter-spacing:0.963px">Quemby Peck</span></div>
<div class="td" style="left:193px;width:252px"><span style="letter-spacing:0.78px">wykumaboh@mailinator.com</span></div>
<div class="td" style="left:445px;width:120px"><span style="letter-spacing:-0.098px">3195545208</span></div>
<div class="td" style="left:565px;width:209px"><span style="letter-spacing:0.577px">Qui modi neque reici</span></div>
<div class="td" style="left:774px;width:69px"><span class="tog"><i></i></span></div>
<div class="td" style="left:843px;width:105px"><span style="letter-spacing:0.038px">21-04-2025</span></div>
<div class="td" style="left:948px;width:114px"><span class="ab g"><svg width="11.500" height="10" viewBox="0 0 576 512"><path fill="#fff" d="M572.520 241.400C518.290 135.590 410.930 64 288 64S57.680 135.640 3.480 241.410a32.350 32.350 0 0 0 0 29.190C57.710 376.410 165.070 448 288 448s230.320-71.640 284.520-177.410a32.350 32.350 0 0 0 0-29.190zM288 400a144 144 0 1 1 144-144 143.930 143.930 0 0 1-144 144zm0-240a95.310 95.310 0 0 0-25.310 3.790 47.850 47.850 0 0 1-66.900 66.900A95.780 95.780 0 1 0 288 160z"/></svg></span><span class="ab b"><svg width="11" height="10" viewBox="0 0 576 512"><path fill="#fff" d="M402.600 83.200l90.200 90.200c3.800 3.800 3.800 10 0 13.800L274.400 405.600l-92.800 10.300c-12.400 1.400-22.900-9.100-21.500-21.500l10.300-92.800L388.800 83.200c3.800-3.800 10-3.800 13.800 0zm162-22.900l-48.800-48.800c-15.200-15.200-39.900-15.200-55.200 0l-35.400 35.400c-3.800 3.800-3.800 10 0 13.800l90.200 90.200c3.800 3.800 10 3.800 13.800 0l35.400-35.400c15.200-15.300 15.200-40 0-55.200zM384 346.200V448H64V128h229.800c3.200 0 6.200-1.300 8.500-3.500l40-40c7.600-7.600 2.200-20.500-8.500-20.500H48C21.500 64 0 85.500 0 112v352c0 26.500 21.500 48 48 48h352c26.500 0 48-21.500 48-48V306.200c0-10.700-12.900-16-20.500-8.500l-40 40c-2.200 2.300-3.500 5.300-3.500 8.500z"/></svg></span><span class="ab r"><svg width="9" height="10" viewBox="0 0 448 512"><path fill="#fff" d="M32 464a48 48 0 0 0 48 48h288a48 48 0 0 0 48-48V128H32zm272-256a16 16 0 0 1 32 0v224a16 16 0 0 1-32 0zm-96 0a16 16 0 0 1 32 0v224a16 16 0 0 1-32 0zm-96 0a16 16 0 0 1 32 0v224a16 16 0 0 1-32 0zM432 32H312l-9.400-18.700A24 24 0 0 0 281.100 0H166.800a23.720 23.720 0 0 0-21.400 13.300L136 32H16A16 16 0 0 0 0 48v32a16 16 0 0 0 16 16h416a16 16 0 0 0 16-16V48a16 16 0 0 0-16-16z"/></svg></span></div>
</div>
<div class="tr" style="top:177.6px">
<div class="td" style="left:0px;width:40px">5</div>
<div class="td" style="left:40px;width:153px"><span style="letter-spacing:0.593px">Isaiah Huber</span></div>
<div class="td" style="left:193px;width:252px"><span style="letter-spacing:0.632px">pyrutevom@mailinator.com</span></div>
<div class="td" style="left:445px;width:120px"><span style="letter-spacing:-0.209px">9013955873</span></div>
<div class="td" style="left:565px;width:209px"><span style="letter-spacing:0.552px">Libero consectetur</span></div>
<div class="td" style="left:774px;width:69px"><span class="tog"><i></i></span></div>
<div class="td" style="left:843px;width:105px"><span style="letter-spacing:0.127px">16-04-2025</span></div>
<div class="td" style="left:948px;width:114px"><span class="ab g"><svg width="11.500" height="10" viewBox="0 0 576 512"><path fill="#fff" d="M572.520 241.400C518.290 135.590 410.930 64 288 64S57.680 135.640 3.480 241.410a32.350 32.350 0 0 0 0 29.190C57.710 376.410 165.070 448 288 448s230.320-71.640 284.520-177.410a32.350 32.350 0 0 0 0-29.190zM288 400a144 144 0 1 1 144-144 143.930 143.930 0 0 1-144 144zm0-240a95.310 95.310 0 0 0-25.310 3.790 47.850 47.850 0 0 1-66.900 66.900A95.780 95.780 0 1 0 288 160z"/></svg></span><span class="ab b"><svg width="11" height="10" viewBox="0 0 576 512"><path fill="#fff" d="M402.600 83.200l90.200 90.200c3.800 3.800 3.800 10 0 13.800L274.400 405.600l-92.800 10.300c-12.400 1.400-22.900-9.100-21.500-21.500l10.300-92.800L388.800 83.200c3.800-3.800 10-3.800 13.800 0zm162-22.900l-48.800-48.800c-15.200-15.200-39.900-15.200-55.200 0l-35.400 35.400c-3.800 3.800-3.800 10 0 13.800l90.200 90.200c3.800 3.800 10 3.800 13.800 0l35.400-35.400c15.200-15.300 15.200-40 0-55.200zM384 346.200V448H64V128h229.800c3.200 0 6.200-1.300 8.500-3.500l40-40c7.600-7.600 2.200-20.500-8.500-20.500H48C21.500 64 0 85.500 0 112v352c0 26.500 21.500 48 48 48h352c26.500 0 48-21.500 48-48V306.200c0-10.700-12.900-16-20.500-8.500l-40 40c-2.200 2.300-3.500 5.300-3.500 8.500z"/></svg></span><span class="ab r"><svg width="9" height="10" viewBox="0 0 448 512"><path fill="#fff" d="M32 464a48 48 0 0 0 48 48h288a48 48 0 0 0 48-48V128H32zm272-256a16 16 0 0 1 32 0v224a16 16 0 0 1-32 0zm-96 0a16 16 0 0 1 32 0v224a16 16 0 0 1-32 0zm-96 0a16 16 0 0 1 32 0v224a16 16 0 0 1-32 0zM432 32H312l-9.400-18.700A24 24 0 0 0 281.100 0H166.800a23.720 23.720 0 0 0-21.400 13.300L136 32H16A16 16 0 0 0 0 48v32a16 16 0 0 0 16 16h416a16 16 0 0 0 16-16V48a16 16 0 0 0-16-16z"/></svg></span></div>
</div>
<div class="tr" style="top:214.45px">
<div class="td" style="left:0px;width:40px">6</div>
<div class="td" style="left:40px;width:153px"><span style="letter-spacing:1.014px">Joy Kent</span></div>
<div class="td" style="left:193px;width:252px"><span style="letter-spacing:0.559px">fevosus@mailinator.com</span></div>
<div class="td" style="left:445px;width:120px"><span style="letter-spacing:-0.209px">3017263505</span></div>
<div class="td" style="left:565px;width:209px"><span style="letter-spacing:0.537px">Sunt elit unde qui</span></div>
<div class="td" style="left:774px;width:69px"><span class="tog"><i></i></span></div>
<div class="td" style="left:843px;width:105px"><span style="letter-spacing:0.172px">14-04-2025</span></div>
<div class="td" style="left:948px;width:114px"><span class="ab g"><svg width="11.500" height="10" viewBox="0 0 576 512"><path fill="#fff" d="M572.520 241.400C518.290 135.590 410.930 64 288 64S57.680 135.640 3.480 241.410a32.350 32.350 0 0 0 0 29.190C57.710 376.410 165.070 448 288 448s230.320-71.640 284.520-177.410a32.350 32.350 0 0 0 0-29.190zM288 400a144 144 0 1 1 144-144 143.930 143.930 0 0 1-144 144zm0-240a95.310 95.310 0 0 0-25.310 3.790 47.850 47.850 0 0 1-66.900 66.900A95.780 95.780 0 1 0 288 160z"/></svg></span><span class="ab b"><svg width="11" height="10" viewBox="0 0 576 512"><path fill="#fff" d="M402.600 83.200l90.200 90.200c3.800 3.800 3.800 10 0 13.800L274.400 405.600l-92.800 10.300c-12.400 1.400-22.900-9.100-21.500-21.500l10.300-92.800L388.800 83.200c3.800-3.800 10-3.800 13.800 0zm162-22.900l-48.800-48.800c-15.200-15.200-39.900-15.200-55.200 0l-35.400 35.400c-3.800 3.800-3.800 10 0 13.800l90.200 90.200c3.800 3.800 10 3.800 13.800 0l35.400-35.400c15.200-15.300 15.200-40 0-55.200zM384 346.200V448H64V128h229.800c3.200 0 6.200-1.300 8.500-3.500l40-40c7.600-7.600 2.200-20.500-8.500-20.500H48C21.500 64 0 85.500 0 112v352c0 26.500 21.500 48 48 48h352c26.500 0 48-21.500 48-48V306.200c0-10.700-12.900-16-20.500-8.500l-40 40c-2.200 2.300-3.500 5.300-3.500 8.500z"/></svg></span><span class="ab r"><svg width="9" height="10" viewBox="0 0 448 512"><path fill="#fff" d="M32 464a48 48 0 0 0 48 48h288a48 48 0 0 0 48-48V128H32zm272-256a16 16 0 0 1 32 0v224a16 16 0 0 1-32 0zm-96 0a16 16 0 0 1 32 0v224a16 16 0 0 1-32 0zm-96 0a16 16 0 0 1 32 0v224a16 16 0 0 1-32 0zM432 32H312l-9.400-18.700A24 24 0 0 0 281.100 0H166.800a23.720 23.720 0 0 0-21.400 13.300L136 32H16A16 16 0 0 0 0 48v32a16 16 0 0 0 16 16h416a16 16 0 0 0 16-16V48a16 16 0 0 0-16-16z"/></svg></span></div>
</div>
<div class="tr" style="top:251.3px">
<div class="td" style="left:0px;width:40px">7</div>
<div class="td" style="left:40px;width:153px"><span style="letter-spacing:0.561px">Gay Bennett</span></div>
<div class="td" style="left:193px;width:252px"><span style="letter-spacing:0.623px">dilequx@mailinator.com</span></div>
<div class="td" style="left:445px;width:120px"><span style="letter-spacing:0.28px">9544563699</span></div>
<div class="td" style="left:565px;width:209px"><span style="letter-spacing:0.493px">Ut inventore digniss</span></div>
<div class="td" style="left:774px;width:69px"><span class="tog"><i></i></span></div>
<div class="td" style="left:843px;width:105px"><span style="letter-spacing:0.172px">14-04-2025</span></div>
<div class="td" style="left:948px;width:114px"><span class="ab g"><svg width="11.500" height="10" viewBox="0 0 576 512"><path fill="#fff" d="M572.520 241.400C518.290 135.590 410.930 64 288 64S57.680 135.640 3.480 241.410a32.350 32.350 0 0 0 0 29.190C57.710 376.410 165.070 448 288 448s230.320-71.640 284.520-177.410a32.350 32.350 0 0 0 0-29.190zM288 400a144 144 0 1 1 144-144 143.930 143.930 0 0 1-144 144zm0-240a95.310 95.310 0 0 0-25.310 3.790 47.850 47.850 0 0 1-66.900 66.900A95.780 95.780 0 1 0 288 160z"/></svg></span><span class="ab b"><svg width="11" height="10" viewBox="0 0 576 512"><path fill="#fff" d="M402.600 83.200l90.200 90.200c3.800 3.800 3.800 10 0 13.800L274.400 405.600l-92.800 10.300c-12.400 1.400-22.900-9.100-21.500-21.500l10.300-92.800L388.800 83.200c3.800-3.800 10-3.800 13.800 0zm162-22.900l-48.800-48.800c-15.200-15.200-39.900-15.200-55.200 0l-35.400 35.400c-3.800 3.800-3.800 10 0 13.800l90.200 90.200c3.800 3.800 10 3.800 13.800 0l35.400-35.400c15.200-15.300 15.200-40 0-55.200zM384 346.200V448H64V128h229.800c3.200 0 6.200-1.300 8.500-3.500l40-40c7.600-7.600 2.200-20.500-8.500-20.500H48C21.500 64 0 85.500 0 112v352c0 26.500 21.500 48 48 48h352c26.500 0 48-21.500 48-48V306.200c0-10.700-12.900-16-20.500-8.500l-40 40c-2.200 2.300-3.500 5.300-3.500 8.500z"/></svg></span><span class="ab r"><svg width="9" height="10" viewBox="0 0 448 512"><path fill="#fff" d="M32 464a48 48 0 0 0 48 48h288a48 48 0 0 0 48-48V128H32zm272-256a16 16 0 0 1 32 0v224a16 16 0 0 1-32 0zm-96 0a16 16 0 0 1 32 0v224a16 16 0 0 1-32 0zm-96 0a16 16 0 0 1 32 0v224a16 16 0 0 1-32 0zM432 32H312l-9.400-18.700A24 24 0 0 0 281.100 0H166.800a23.720 23.720 0 0 0-21.400 13.300L136 32H16A16 16 0 0 0 0 48v32a16 16 0 0 0 16 16h416a16 16 0 0 0 16-16V48a16 16 0 0 0-16-16z"/></svg></span></div>
</div>
<div class="tr" style="top:288.15px">
<div class="td" style="left:0px;width:40px">8</div>
<div class="td" style="left:40px;width:153px"><span style="letter-spacing:0.732px">Acton Cote</span></div>
<div class="td" style="left:193px;width:252px"><span style="letter-spacing:0.601px">solac@mailinator.com</span></div>
<div class="td" style="left:445px;width:120px"><span style="letter-spacing:-0.698px">5361229931</span></div>
<div class="td" style="left:565px;width:209px"><span style="letter-spacing:0.681px">Magnam voluptatem de</span></div>
<div class="td" style="left:774px;width:69px"><span class="tog"><i></i></span></div>
<div class="td" style="left:843px;width:105px"><span style="letter-spacing:0.172px">14-04-2025</span></div>
<div class="td" style="left:948px;width:114px"><span class="ab g"><svg width="11.500" height="10" viewBox="0 0 576 512"><path fill="#fff" d="M572.520 241.400C518.290 135.590 410.930 64 288 64S57.680 135.640 3.480 241.410a32.350 32.350 0 0 0 0 29.190C57.710 376.410 165.070 448 288 448s230.320-71.640 284.520-177.410a32.350 32.350 0 0 0 0-29.190zM288 400a144 144 0 1 1 144-144 143.930 143.930 0 0 1-144 144zm0-240a95.310 95.310 0 0 0-25.310 3.790 47.850 47.850 0 0 1-66.900 66.900A95.780 95.780 0 1 0 288 160z"/></svg></span><span class="ab b"><svg width="11" height="10" viewBox="0 0 576 512"><path fill="#fff" d="M402.600 83.200l90.200 90.200c3.800 3.800 3.800 10 0 13.800L274.400 405.600l-92.800 10.300c-12.400 1.400-22.900-9.100-21.500-21.500l10.300-92.800L388.800 83.200c3.800-3.800 10-3.800 13.800 0zm162-22.900l-48.800-48.800c-15.200-15.200-39.900-15.200-55.200 0l-35.400 35.400c-3.800 3.800-3.800 10 0 13.800l90.200 90.200c3.800 3.800 10 3.800 13.800 0l35.400-35.400c15.200-15.300 15.200-40 0-55.200zM384 346.200V448H64V128h229.800c3.200 0 6.200-1.300 8.500-3.500l40-40c7.600-7.600 2.200-20.500-8.500-20.500H48C21.500 64 0 85.500 0 112v352c0 26.500 21.500 48 48 48h352c26.500 0 48-21.500 48-48V306.200c0-10.700-12.900-16-20.500-8.500l-40 40c-2.200 2.300-3.500 5.300-3.500 8.500z"/></svg></span><span class="ab r"><svg width="9" height="10" viewBox="0 0 448 512"><path fill="#fff" d="M32 464a48 48 0 0 0 48 48h288a48 48 0 0 0 48-48V128H32zm272-256a16 16 0 0 1 32 0v224a16 16 0 0 1-32 0zm-96 0a16 16 0 0 1 32 0v224a16 16 0 0 1-32 0zm-96 0a16 16 0 0 1 32 0v224a16 16 0 0 1-32 0zM432 32H312l-9.400-18.700A24 24 0 0 0 281.100 0H166.800a23.720 23.720 0 0 0-21.400 13.300L136 32H16A16 16 0 0 0 0 48v32a16 16 0 0 0 16 16h416a16 16 0 0 0 16-16V48a16 16 0 0 0-16-16z"/></svg></span></div>
</div>
<div class="tr" style="top:325.0px">
<div class="td" style="left:0px;width:40px">9</div>
<div class="td" style="left:40px;width:153px"><span style="letter-spacing:0.883px">Wyoming Hewitt</span></div>
<div class="td" style="left:193px;width:252px"><span style="letter-spacing:0.708px">gidexokumi@mailinator.com</span></div>
<div class="td" style="left:445px;width:120px"><span style="letter-spacing:0.28px">4366386945</span></div>
<div class="td" style="left:565px;width:209px"><span style="letter-spacing:0.411px">Optio et quia et se</span></div>
<div class="td" style="left:774px;width:69px"><span class="tog"><i></i></span></div>
<div class="td" style="left:843px;width:105px"><span style="letter-spacing:0.172px">14-04-2025</span></div>
<div class="td" style="left:948px;width:114px"><span class="ab g"><svg width="11.500" height="10" viewBox="0 0 576 512"><path fill="#fff" d="M572.520 241.400C518.290 135.590 410.930 64 288 64S57.680 135.640 3.480 241.410a32.350 32.350 0 0 0 0 29.190C57.710 376.410 165.070 448 288 448s230.320-71.640 284.520-177.410a32.350 32.350 0 0 0 0-29.190zM288 400a144 144 0 1 1 144-144 143.930 143.930 0 0 1-144 144zm0-240a95.310 95.310 0 0 0-25.310 3.790 47.850 47.850 0 0 1-66.900 66.900A95.780 95.780 0 1 0 288 160z"/></svg></span><span class="ab b"><svg width="11" height="10" viewBox="0 0 576 512"><path fill="#fff" d="M402.600 83.200l90.200 90.200c3.800 3.800 3.800 10 0 13.800L274.400 405.600l-92.800 10.300c-12.400 1.400-22.900-9.100-21.500-21.500l10.300-92.800L388.800 83.200c3.800-3.800 10-3.800 13.800 0zm162-22.900l-48.800-48.800c-15.200-15.200-39.900-15.200-55.200 0l-35.400 35.400c-3.800 3.800-3.800 10 0 13.800l90.200 90.200c3.800 3.800 10 3.800 13.800 0l35.400-35.400c15.200-15.300 15.200-40 0-55.200zM384 346.200V448H64V128h229.800c3.200 0 6.200-1.300 8.500-3.500l40-40c7.600-7.600 2.200-20.500-8.500-20.500H48C21.500 64 0 85.500 0 112v352c0 26.500 21.500 48 48 48h352c26.500 0 48-21.500 48-48V306.200c0-10.700-12.900-16-20.500-8.500l-40 40c-2.200 2.300-3.500 5.300-3.500 8.500z"/></svg></span><span class="ab r"><svg width="9" height="10" viewBox="0 0 448 512"><path fill="#fff" d="M32 464a48 48 0 0 0 48 48h288a48 48 0 0 0 48-48V128H32zm272-256a16 16 0 0 1 32 0v224a16 16 0 0 1-32 0zm-96 0a16 16 0 0 1 32 0v224a16 16 0 0 1-32 0zm-96 0a16 16 0 0 1 32 0v224a16 16 0 0 1-32 0zM432 32H312l-9.400-18.700A24 24 0 0 0 281.100 0H166.800a23.720 23.720 0 0 0-21.400 13.300L136 32H16A16 16 0 0 0 0 48v32a16 16 0 0 0 16 16h416a16 16 0 0 0 16-16V48a16 16 0 0 0-16-16z"/></svg></span></div>
</div>
<div class="tr" style="top:361.85px">
<div class="td" style="left:0px;width:40px">10</div>
<div class="td" style="left:40px;width:153px"><span style="letter-spacing:0.547px">Cailin Nixon</span></div>
<div class="td" style="left:193px;width:252px"><span style="letter-spacing:0.559px">wyhylexex@mailinator.com</span></div>
<div class="td" style="left:445px;width:120px"><span style="letter-spacing:-0.042px">6294447132</span></div>
<div class="td" style="left:565px;width:209px"><span style="letter-spacing:0.489px">Dolor ratione corrup</span></div>
<div class="td" style="left:774px;width:69px"><span class="tog"><i></i></span></div>
<div class="td" style="left:843px;width:105px"><span style="letter-spacing:0.172px">14-04-2025</span></div>
<div class="td" style="left:948px;width:114px"><span class="ab g"><svg width="11.500" height="10" viewBox="0 0 576 512"><path fill="#fff" d="M572.520 241.400C518.290 135.590 410.930 64 288 64S57.680 135.640 3.480 241.410a32.350 32.350 0 0 0 0 29.190C57.710 376.410 165.070 448 288 448s230.320-71.640 284.520-177.410a32.350 32.350 0 0 0 0-29.190zM288 400a144 144 0 1 1 144-144 143.930 143.930 0 0 1-144 144zm0-240a95.310 95.310 0 0 0-25.310 3.790 47.850 47.850 0 0 1-66.900 66.900A95.780 95.780 0 1 0 288 160z"/></svg></span><span class="ab b"><svg width="11" height="10" viewBox="0 0 576 512"><path fill="#fff" d="M402.600 83.200l90.200 90.200c3.800 3.800 3.800 10 0 13.800L274.400 405.600l-92.800 10.300c-12.400 1.400-22.900-9.100-21.500-21.500l10.300-92.800L388.800 83.200c3.800-3.800 10-3.800 13.800 0zm162-22.900l-48.800-48.800c-15.200-15.200-39.900-15.200-55.200 0l-35.400 35.400c-3.800 3.800-3.800 10 0 13.800l90.200 90.200c3.800 3.800 10 3.800 13.800 0l35.400-35.400c15.200-15.300 15.200-40 0-55.200zM384 346.200V448H64V128h229.800c3.200 0 6.200-1.300 8.500-3.500l40-40c7.600-7.600 2.200-20.500-8.500-20.500H48C21.500 64 0 85.500 0 112v352c0 26.500 21.500 48 48 48h352c26.500 0 48-21.500 48-48V306.200c0-10.700-12.900-16-20.500-8.500l-40 40c-2.200 2.300-3.500 5.300-3.500 8.500z"/></svg></span><span class="ab r"><svg width="9" height="10" viewBox="0 0 448 512"><path fill="#fff" d="M32 464a48 48 0 0 0 48 48h288a48 48 0 0 0 48-48V128H32zm272-256a16 16 0 0 1 32 0v224a16 16 0 0 1-32 0zm-96 0a16 16 0 0 1 32 0v224a16 16 0 0 1-32 0zm-96 0a16 16 0 0 1 32 0v224a16 16 0 0 1-32 0zM432 32H312l-9.400-18.700A24 24 0 0 0 281.100 0H166.800a23.720 23.720 0 0 0-21.400 13.300L136 32H16A16 16 0 0 0 0 48v32a16 16 0 0 0 16 16h416a16 16 0 0 0 16-16V48a16 16 0 0 0-16-16z"/></svg></span></div>
</div>
<div class="hb" style="top:67px"></div>
<div class="hb" style="top:104px"></div>
<div class="hb" style="top:141px"></div>
<div class="hb" style="top:177px"></div>
<div class="hb" style="top:214px"></div>
<div class="hb" style="top:251px"></div>
<div class="hb" style="top:288px"></div>
<div class="hb" style="top:324px"></div>
<div class="hb" style="top:361px"></div>
<div class="hb" style="top:398px"></div>
<div class="vb" style="left:0px"></div>
<div class="vb" style="left:40px"></div>
<div class="vb" style="left:193px"></div>
<div class="vb" style="left:445px"></div>
<div class="vb" style="left:565px"></div>
<div class="vb" style="left:774px"></div>
<div class="vb" style="left:843px"></div>
<div class="vb" style="left:948px"></div>
<div class="vb" style="left:1062px"></div>
</div>
<div class="abs" style="left:981px;top:556px;width:97px;height:30px;border:1px solid #dee2e6;border-radius:6px;background:#fff"></div>
<div class="abs" style="left:1004px;top:556px;width:25px;height:30px;background:#ffc107"></div>
<div class="abs" style="left:1054px;top:557px;width:1px;height:30px;background:#dee2e6"></div>
<div class="abs" style="left:79px;top:558px;width:51px;height:30px;border:1px solid #dee2e6;border-radius:5px;background:#fff"></div>
</div>
</div>
<div id="vscroll"><svg class="abs" style="left:3px;top:6px" width="9" height="5" viewBox="0 0 9 5"><path d="M0 5L4.500 0 9 5z" fill="#9f9f9f"/></svg><div class="th2"></div><svg class="abs" style="left:3px;top:629px" width="9" height="5" viewBox="0 0 9 5"><path d="M0 0L4.500 5 9 0z" fill="#9f9f9f"/></svg></div>
<div id="task">
<div class="abs" style="left:0;top:0;width:48px;height:40px;background:#172538"></div>
<svg class="abs" style="left:16px;top:12px" width="16" height="16" viewBox="0 0 16 16"><path fill="#fff" d="M0 2.300l6.500-.9v6.200H0zM7.300 1.300L16 0v7.600H7.300zM0 8.400h6.500v6.200L0 13.700zM7.300 8.400H16V16l-8.700-1.300z"/></svg>
<div class="abs" style="left:48px;top:0;width:288px;height:40px;background:#333;border:1px solid #686868"></div>
<svg class="abs" style="left:59.500px;top:11.500px" width="17" height="17" viewBox="0 0 17 17"><circle cx="11" cy="6.200" r="5.200" fill="none" stroke="#f0f0f0" stroke-width="1.300"/><path d="M7.300 9.900L.6 16.600" stroke="#f0f0f0" stroke-width="1.400"/></svg>
<div class="abs" style="left:88.500px;top:11px;font-size:14.600px;line-height:18px;color:#e4e4e4;white-space:nowrap"><span style="letter-spacing:-0.079px">Type here to search</span></div>
<svg class="abs" style="left:256px;top:0" width="80" height="40" viewBox="0 0 80 40"><defs><radialGradient id="eg" cx=".7" cy=".35" r=".8"><stop offset="0" stop-color="#9bdcff"/><stop offset=".45" stop-color="#86c8fb"/><stop offset="1" stop-color="#4a63dc"/></radialGradient><linearGradient id="lg1" x1="0" y1="0" x2="1" y2="1"><stop offset="0" stop-color="#7fb414"/><stop offset="1" stop-color="#0a8a12"/></linearGradient><linearGradient id="lf" x1="0" y1="0" x2="1" y2="1"><stop offset="0" stop-color="#6fb013"/><stop offset=".6" stop-color="#b5d21c"/><stop offset="1" stop-color="#7cb517"/></linearGradient></defs><path d="M9.900 24.300c5.500.4 10.500 2.600 12.800 8.700-5 2.600-10.400 1.200-12-4.200-.5-1.500-.8-3-.8-4.500z" fill="url(#lf)"/><path d="M55.200 2.700c4.200 1.300 8 4.300 8.300 8.300-.4 2.400-1.700 3.800-3.300 4.600-3.300-2.300-5.300-7.300-5-12.900z" fill="url(#lf)"/><path d="M72.800 18.200c.8 6.300-1.500 12.200-7.300 14.800-2.300.8-4.800.8-7.200.2l-3.500 2.600-.7-.9 3.300-2.800c-.3-6.500 6.900-12.300 15.400-13.900z" fill="url(#lf)"/><circle cx="40.200" cy="20.800" r="16.100" fill="url(#eg)"/><path d="M36.300 7c4-2.300 12-1 16.400 4.700 1.600 1.800 2.400 3.600 2.600 5.300-.5 1.400-1.500 2.600-2.600 3.500-.3-1.300-.9-2.500-1.700-3.500-1-.3-2-.4-3-.1-.3.800-.6 1.500-1.100 1.800-1.300-.1-2.500-.4-3.600-1.100-.2-.9-.6-1.700-1.100-2.400-.5-.7-1.100-1.300-1.800-1.700-1.800-.4-3.600-.6-5.300-.6-1 .3-1.900.8-2.600 1.400-.5-.8-.8-1.700-.6-2.600.8-.7 1.700-1.200 2.700-1.500 1-.2 2-.4 2.900-.5-.7-.8-1.100-1.700-1.200-2.700z" fill="url(#lg1)"/><path d="M35.100 15.300c2-.2 4-.1 5.900.2.900.5 1.600 1.200 2 2.100.3.700.5 1.500.6 2.300.8.800 1.700 1.400 2.700 1.800-.2 1-.6 2-1.200 2.900-.7 1.200-1.500 2.400-2.300 3.500-.6 1.200-1.200 2.300-1.800 3.500-.8.300-1.600.3-2.300 0-.5-1.300-.9-2.700-1.200-4.100-.4-1.400-.8-2.700-1.200-4.100-1.200-.2-2.400-.5-3.500-.9-1.200-.7-2.300-1.500-3.200-2.600.3-1.100.8-2.100 1.400-2.900 1.300-.8 2.700-1.400 4.100-1.700z" fill="url(#lg1)"/><circle cx="46.900" cy="27.200" r=".8" fill="#1c9a1c"/><g fill="#ffc81e"><circle cx="13.60" cy="11.60" r="3.2"/><circle cx="17.50" cy="14.43" r="3.2"/><circle cx="16.01" cy="19.02" r="3.2"/><circle cx="11.19" cy="19.02" r="3.2"/><circle cx="9.70" cy="14.43" r="3.2"/><circle cx="22.50" cy="5.70" r="1.3"/><circle cx="24.02" cy="6.81" r="1.3"/><circle cx="23.44" cy="8.59" r="1.3"/><circle cx="21.56" cy="8.59" r="1.3"/><circle cx="20.98" cy="6.81" r="1.3"/><circle cx="69.50" cy="9.60" r="2.1"/><circle cx="72.07" cy="11.47" r="2.1"/><circle cx="71.09" cy="14.48" r="2.1"/><circle cx="67.91" cy="14.48" r="2.1"/><circle cx="66.93" cy="11.47" r="2.1"/></g><circle cx="13.600" cy="15.600" r="2.600" fill="#f6802c"/><circle cx="22.500" cy="7.300" r=".9" fill="#f6802c"/><circle cx="69.500" cy="12.200" r="1.700" fill="#f6802c"/></svg>
<svg class="abs" style="left:351px;top:11px" width="18" height="17" viewBox="0 0 18 17"><g fill="none" stroke="#f4f4f4" stroke-width="1.200" shape-rendering="crispEdges"><rect x="1.100" y="4.700" width="10.800" height="7.600"/><path d="M1.100 3V1.400h10.800V3M1.100 14v1.600h10.800V14M15.500 .8v3.700M15.500 7.500v8.700"/></g><rect x="14" y="4.300" width="3" height="3.200" fill="#f4f4f4"/></svg>
<svg class="abs" style="left:398px;top:9px" width="24" height="22" viewBox="0 0 24 22"><defs><linearGradient id="cpa" x1="0" y1="0" x2="0" y2="1"><stop offset="0" stop-color="#1a6fe0"/><stop offset=".35" stop-color="#27a9c9"/><stop offset=".65" stop-color="#8fcf3a"/><stop offset="1" stop-color="#f6c516"/></linearGradient><linearGradient id="cpb" x1="0" y1="0" x2="0" y2="1"><stop offset="0" stop-color="#9a5cf0"/><stop offset=".4" stop-color="#e24b9c"/><stop offset=".75" stop-color="#fb7a4e"/><stop offset="1" stop-color="#fba32a"/></linearGradient></defs><path d="M7.500 .8h6.800c1.500 0 2.500.8 2.900 2.200l.9 3h-3.300c-1.500 0-2.600.9-3 2.400l-1.700 6.200c-.4 1.500-1.500 2.300-3 2.300H3.400C1.600 16.900.600 15.500 1.100 13.800l2.600-9.900C4.200 1.900 5.600.8 7.500.8z" fill="url(#cpa)"/><path d="M16.500 21.200H9.700c-1.500 0-2.500-.8-2.900-2.200l-.9-3h3.300c1.500 0 2.600-.9 3-2.400l1.700-6.200c.4-1.500 1.500-2.300 3-2.300h3.700c1.800 0 2.800 1.400 2.300 3.100l-2.600 9.900c-.5 2-1.900 3.100-3.800 3.100z" fill="url(#cpb)"/><path d="M11 6.500h3.200l-2.300 8.800H8.700z" fill="#2a2228" opacity=".55"/></svg>
<svg class="abs" style="left:446px;top:7.500px" width="25" height="25" viewBox="0 0 25 25"><defs><linearGradient id="eda" x1=".2" y1="0" x2="1" y2=".8"><stop offset="0" stop-color="#2aa8e0"/><stop offset=".55" stop-color="#35c3b5"/><stop offset="1" stop-color="#5fd84a"/></linearGradient><linearGradient id="edb" x1="0" y1="0" x2=".6" y2="1"><stop offset="0" stop-color="#1f8fdc"/><stop offset="1" stop-color="#0f5cb0"/></linearGradient></defs><path d="M1 11.500C1.500 5 6.500.5 12.800.5c6.500 0 11.500 4.700 11.500 10 0 3.600-2.800 6-6.200 6-2.200 0-3.700-.8-3.700-1.900 0-.9 1-1.300 1-2.900 0-2.300-2.200-4.400-5.300-4.400C6 7.300 2.500 9 1 11.500z" fill="url(#eda)"/><path d="M1 11.500c-.5 6.800 4.700 13 11.800 13 3.500 0 6.800-1.500 9-4.300.4-.5-.1-1-.6-.7-1.400.8-3 1.200-4.700 1.200-5.200 0-8.800-3.600-8.800-7.700 0-2.200 1-4.200 2.700-5.600C6.200 7.400 2.400 9 1 11.500z" fill="url(#edb)"/><path d="M7.700 13c0 4.100 3.600 7.700 8.800 7.700 1.700 0 3.300-.4 4.700-1.200-2 3-5.600 4-8.700 3.200-3.800-1-6.200-4.600-6-8.200.1-2.300 1.500-4.600 3.900-6.100C8.700 9.700 7.700 11.200 7.700 13z" fill="#0c4f9e"/></svg>
<svg class="abs" style="left:494px;top:10px" width="24" height="21" viewBox="0 0 24 21"><path d="M1 2.500C1 1.700 1.700 1 2.500 1h6l2 2.500H22c.6 0 1 .4 1 1V19c0 .6-.4 1-1 1H2c-.6 0-1-.4-1-1z" fill="#f5b83d"/><path d="M1 7h22v12c0 .6-.4 1-1 1H2c-.6 0-1-.4-1-1z" fill="#ffd766"/><rect x="7" y="12" width="10" height="8" fill="#3f8ad9"/><rect x="9.500" y="15" width="5" height="5" fill="#ffd766"/></svg>
<svg class="abs" style="left:541px;top:8px" width="28" height="26" viewBox="0 0 28 26"><circle cx="12" cy="13" r="11" fill="#2a63c9"/><path d="M3 8c3-5 9-7 14-5 3 1 5 3 6 6-2-1-4-1-5 0 2 1 3 3 3 5-3-2-6-2-9 0-3 2-7 1-9-2z" fill="#5fa3ee"/><ellipse cx="11" cy="14.500" rx="6" ry="5" fill="#e8edf5"/><circle cx="19.500" cy="18.500" r="6.200" fill="#e5202e"/></svg><div class="abs bdg" style="left:554.500px;top:20px;width:12px">5</div>
<div class="abs" style="left:579px;top:0;width:47px;height:40px;background:rgba(255,255,255,.24)"></div>
<svg class="abs" style="left:590px;top:8px" width="24" height="24" viewBox="0 0 24 24"><circle cx="12" cy="12" r="11.500" fill="#fff"/><path d="M12 12L2.040 6.250A11.500 11.500 0 0 1 21.960 6.250z" fill="#e33b2e"/><path d="M12 12L21.960 6.250A11.500 11.500 0 0 1 12 23.500z" fill="#fcc934"/><path d="M12 12L12 23.500A11.500 11.500 0 0 1 2.040 6.250z" fill="#1fa463"/><circle cx="12" cy="12" r="5.400" fill="#fff"/><circle cx="12" cy="12" r="4.300" fill="#4285f4"/></svg>
<svg class="abs" style="left:638px;top:8px" width="24" height="24" viewBox="0 0 24 24"><circle cx="12" cy="12" r="11.500" fill="#f0401c"/><path d="M4.500 8l3 8.500 2.700-6 2.600 6L16 8M16 8h4l-2.500 4.500" fill="none" stroke="#fff" stroke-width="2"/></svg>
<svg class="abs" style="left:685px;top:7px" width="30" height="30" viewBox="0 0 30 30"><circle cx="8.500" cy="8.500" r="7" fill="#0f9fe6"/><circle cx="16" cy="16.500" r="7" fill="#0f88d8"/><circle cx="12.500" cy="12.500" r="9.200" fill="#15a6ec"/><circle cx="19.700" cy="19.800" r="7.300" fill="#e8323c"/></svg><div class="abs" style="left:692px;top:8px;font-size:18px;font-weight:400;color:#fff;line-height:22px;-webkit-text-stroke:.5px #fff">S</div><div class="abs bdg" style="left:698.700px;top:20.800px;width:12px;font-size:11px">4</div>
<svg class="abs" style="left:734px;top:8px" width="24" height="24" viewBox="0 0 24 24"><defs><linearGradient id="xg" x1="0" y1="0" x2="0" y2="1"><stop offset="0" stop-color="#f6953c"/><stop offset=".5" stop-color="#f07c15"/><stop offset="1" stop-color="#ee7410"/></linearGradient></defs><rect x=".3" y=".3" width="23.400" height="23.400" rx="3" fill="url(#xg)"/><g fill="#fff"><circle cx="8" cy="8.600" r="3.900"/><circle cx="16" cy="8.600" r="3.900"/><circle cx="8" cy="15.600" r="3.900"/><circle cx="16" cy="15.600" r="3.900"/><rect x="8" y="8" width="8" height="8"/></g><g fill="#f07c15"><circle cx="8" cy="8.800" r="1.500"/><circle cx="16" cy="8.800" r="1.500"/><circle cx="8" cy="15.400" r="1.500"/><circle cx="16" cy="15.400" r="1.500"/><rect x="3" y="11.400" width="3.200" height="1.400"/><rect x="17.800" y="11.400" width="3.200" height="1.400"/><rect x="11.300" y="3.500" width="1.400" height="2.800"/><rect x="11.300" y="17.800" width="1.400" height="2.800"/></g></svg>
<svg class="abs" style="left:781px;top:8px" width="24" height="24" viewBox="0 0 24 24"><rect x=".5" y=".5" width="23" height="23" fill="#a80b0b" stroke="#cf1a1a" stroke-dasharray="1.500 1"/></svg><div class="abs" style="left:785px;top:9px;font-size:19px;font-weight:700;font-style:italic;color:#fff;line-height:22px;letter-spacing:-2.200px;transform:scaleX(.9);transform-origin:0 50%">Fz</div>
<svg class="abs" style="left:828px;top:10px" width="24" height="20" viewBox="0 0 24 20"><path d="M5 1h18.500l-4.500 18H.5z" fill="#2e6fd4"/><path d="M7 5l6 5-7 5" fill="none" stroke="#fff" stroke-width="2"/><path d="M12.500 15.500h5" stroke="#fff" stroke-width="1.800"/></svg>
<svg class="abs" style="left:873px;top:8px" width="34" height="30" viewBox="0 0 34 30"><circle cx="12" cy="3.500" r="3.200" fill="#7b83eb"/><circle cx="19" cy="5" r="2.400" fill="#5059c9"/><rect x="10" y="8" width="13" height="13" rx="2.500" fill="#5059c9"/><rect x="1" y="6" width="14" height="14" rx="2" fill="#4b53bc"/><path d="M4.500 10h7M8 10v7.500" stroke="#fff" stroke-width="1.800"/><circle cx="18" cy="17.700" r="7.600" fill="#c4231f"/><circle cx="26.700" cy="19.400" r="8" fill="#30333a" stroke="#b9bdc3" stroke-width=".9"/></svg><div class="abs bdg" style="left:893.700px;top:21px;width:12px;font-size:12.500px;font-weight:700">8</div>
<svg class="abs" style="left:922px;top:8px" width="24" height="24" viewBox="0 0 24 24"><path d="M17.500.8L23 3.300v17.400l-5.500 2.500L6 13.200 2.500 16 1 15V9l1.500-1L6 10.800z" fill="#2b9ef0"/><path d="M17.500.8V23.200L23 20.700V3.300z" fill="#1a7fd0"/><path d="M17.500 6.500L10 12l7.500 5.500z" fill="#1e2a38"/></svg>
<svg class="abs" style="left:968px;top:10px" width="24" height="20" viewBox="0 0 24 20"><rect x=".5" y=".5" width="23" height="19" fill="#050505" stroke="#8a8a8a" stroke-width=".8"/><rect x=".5" y=".5" width="23" height="2.500" fill="#bdbdbd"/><path d="M3 8h4M3.500 6.500l1.500 3M9 9.500h6" stroke="#d8d8d8" stroke-width="1"/></svg>
<div class="abs" style="left:487px;top:38px;width:39px;height:2px;background:#82bfee"></div>
<div class="abs" style="left:535px;top:38px;width:39px;height:2px;background:#82bfee"></div>
<div class="abs" style="left:579px;top:38px;width:47px;height:2px;background:#82bfee"></div>
<div class="abs" style="left:631px;top:38px;width:30px;height:2px;background:#82bfee"></div>
<div class="abs" style="left:679px;top:38px;width:39px;height:2px;background:#82bfee"></div>
<div class="abs" style="left:727px;top:38px;width:38px;height:2px;background:#82bfee"></div>
<div class="abs" style="left:774px;top:38px;width:38px;height:2px;background:#82bfee"></div>
<div class="abs" style="left:820px;top:38px;width:30px;height:2px;background:#82bfee"></div>
<div class="abs" style="left:868px;top:38px;width:38px;height:2px;background:#82bfee"></div>
<div class="abs" style="left:915px;top:38px;width:38px;height:2px;background:#82bfee"></div>
<div class="abs" style="left:962px;top:38px;width:38px;height:2px;background:#82bfee"></div>
<div class="abs" style="left:661px;top:38px;width:5px;height:2px;background:#5f93bd"></div>
<div class="abs" style="left:850px;top:38px;width:9px;height:2px;background:#5f93bd"></div>
<svg class="abs" style="left:1029px;top:8px" width="26" height="24" viewBox="0 0 26 24"><defs><linearGradient id="sun" x1="0" y1="0" x2="0" y2="1"><stop offset="0" stop-color="#ffd83a"/><stop offset=".5" stop-color="#f9a11b"/><stop offset="1" stop-color="#ee4a1c"/></linearGradient></defs><circle cx="12.500" cy="12" r="9.800" fill="url(#sun)"/><path d="M3.500 8.700h9M2.500 11.700h12M1.200 14.900h14M2.800 18h13.500" stroke="#f6e3ad" stroke-width="1.700" stroke-linecap="round"/><circle cx="18.300" cy="6" r="5" fill="#d2232a"/></svg><div class="abs bdg" style="left:1041.800px;top:8px;width:11px;font-size:9.500px">1</div>
<div class="abs tx" style="left:1062px;top:12px;font-size:14px"><span style="letter-spacing:-0.407px">33°C</span></div>
<svg class="abs" style="left:1117px;top:15px" width="12" height="8" viewBox="0 0 12 8"><path d="M.8 7L6 1.500 11.200 7" fill="none" stroke="#f2f2f2" stroke-width="1.300"/></svg>
<svg class="abs" style="left:1141px;top:11px" width="13" height="17" viewBox="0 0 13 17"><g fill="none" stroke="#f2f2f2" stroke-width="1"><path d="M1.500 3.500C2 1.500 3 .8 5 .8s3 .7 3.500 2.700M1.500 13.500c.5 2 1.500 2.700 3.500 2.700s3-.7 3.500-2.700"/><rect x=".8" y="5.500" width="7.500" height="6" rx="1"/><path d="M8.500 8l3.200-2v5L8.500 9"/></g></svg>
<svg class="abs" style="left:1162px;top:12px" width="18" height="16" viewBox="0 0 18 16"><g fill="none" stroke="#f2f2f2" stroke-width="1.100"><rect x="4.500" y="1" width="12.500" height="9.500"/><path d="M10.500 10.500v3.500M7 14.500h7"/><rect x=".6" y=".6" width="4" height="4.500"/><path d="M2.500 5v8"/></g></svg>
<svg class="abs" style="left:1187px;top:11px" width="18" height="18" viewBox="0 0 18 18"><g fill="none" stroke="#f2f2f2" stroke-width="1.100"><path d="M1 6.500h3l4-4v13l-4-4H1z"/><path d="M10.500 6.500c1 1.500 1 3.500 0 5M12.800 4.500c2 2.700 2 6.300 0 9M15 2.500c3 4 3 9 0 13"/></g></svg>
<div class="abs tx" style="left:1213px;top:13px;font-size:12px"><span style="letter-spacing:-1.212px">ENG</span></div>
<div class="abs tx" style="left:1246px;top:3px;width:63px;text-align:center;font-size:12.200px"><span style="letter-spacing:-0.733px">12:08</span></div>
<div class="abs tx" style="left:1246px;top:21.500px;width:63px;text-align:center;font-size:12.200px"><span style="letter-spacing:-0.368px">22-04-2025</span></div>
<svg class="abs" style="left:1324px;top:11px" width="28" height="27" viewBox="0 0 28 27"><path d="M1 1h16v13.300H7.500L4.500 17.500v-3.200H1z" fill="#f4f4f4"/><path d="M4 4.500h10M4 7.500h10M4 10.500h10" stroke="#2d3c50" stroke-width="1"/><circle cx="16.400" cy="16.300" r="8.300" fill="#2e3238" stroke="#aeb4bb" stroke-width=".8"/></svg><div class="abs bdg" style="left:1332.500px;top:21px;width:16px;font-size:11px;font-weight:700;letter-spacing:-.6px">15</div>
<div class="abs" style="left:1361px;top:0;width:1px;height:40px;background:#8d97a3"></div>
</div>
</body>
</html>
